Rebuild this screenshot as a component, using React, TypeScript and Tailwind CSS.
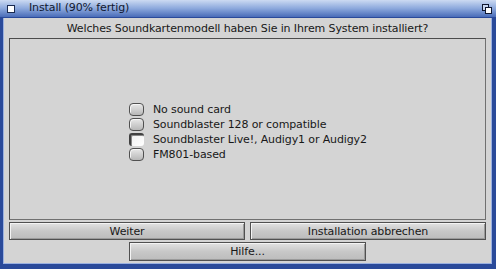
import React, { useState } from 'react';

const options = [
  'No sound card',
  'Soundblaster 128 or compatible',
  'Soundblaster Live!, Audigy1 or Audigy2',
  'FM801-based',
];

const Button: React.FC<{ label: string; className?: string }> = ({ label, className }) => (
  <button
    className={`h-[18px] border border-[#505050] bg-gradient-to-b from-[#e2e2e2] via-[#c8c8c8] to-[#bcbcbc] text-[11px] leading-none tracking-[-0.12px] text-[#181818] shadow-[inset_1px_1px_0_#f4f4f4,inset_-1px_-1px_0_#9a9a9a] ${className ?? ''}`}
  >
    {label}
  </button>
);

const Radio: React.FC<{ checked: boolean }> = ({ checked }) =>
  checked ? (
    <span className="w-[15px] h-[13px] rounded-[3px] bg-gradient-to-br from-[#f0f0f0] to-white border-t-2 border-l-2 border-[#404040] shadow-[inset_1px_1px_0_#888]" />
  ) : (
    <span className="w-[15px] h-[13px] rounded-[4px] border border-[#505050] bg-gradient-to-b from-[#e8e8e8] to-[#b8b8b8] shadow-[inset_1px_1px_0_#f6f6f6]" />
  );

export default function App() {
  const [selected, setSelected] = useState(2);

  return (
    <div
      className="w-[496px] h-[269px] flex flex-col bg-[#2a4a9a] overflow-hidden"
      style={{ fontFamily: '"DejaVu Sans", Verdana, sans-serif' }}
    >
      {/* title bar */}
      <div className="h-[18px] flex items-center bg-gradient-to-b from-[#ccdaf2] via-[#8ca8dc] to-[#4a6cb8] border-b border-[#2a4a9a]">
        <span className="ml-[7px] w-[8px] h-[8px] bg-white border border-[#1a2a50]" />
        <span className="ml-[14px] text-[11px] tracking-[-0.12px] text-[#101830]">Install (90% fertig)</span>
        <span className="ml-auto mr-[4px] relative w-[10px] h-[10px]">
          <span className="absolute left-0 top-0 w-[7px] h-[7px] border border-[#101830] bg-[#c8d6f0]" />
          <span className="absolute left-[3px] top-[3px] w-[7px] h-[7px] border border-[#101830] bg-white" />
        </span>
      </div>

      {/* body */}
      <div className="flex-1 ml-[3px] mr-[4px] mb-[5px] flex flex-col bg-[#d4d4d4] border-l border-r border-b border-[#9ab0e0] px-[5px]">
        <div className="h-[19px] flex items-center justify-center text-[11px] tracking-[-0.12px] text-[#181818] pt-[3px]">
          Welches Soundkartenmodell haben Sie in Ihrem System installiert?
        </div>
        <div className="flex-1 mt-[1px] border border-[#4c4c4c] border-r-[#707070] border-b-[#707070] bg-[#d4d4d4] flex flex-col items-start justify-center pl-[119px] pt-[5px]">
          {options.map((o, i) => (
            <div
              key={o}
              className="h-[15px] flex items-center gap-[9px] cursor-pointer"
              onClick={() => setSelected(i)}
            >
              <Radio checked={selected === i} />
              <span className="text-[11px] tracking-[-0.12px] text-[#181818] leading-none">{o}</span>
            </div>
          ))}
        </div>
        <div className="mt-[2px] flex gap-[5px]">
          <Button label="Weiter" className="flex-1" />
          <Button label="Installation abbrechen" className="flex-1" />
        </div>
        <div className="mt-[2px] mb-[2px] flex justify-center">
          <Button label="Hilfe..." className="w-[237px] h-[19px]" />
        </div>
      </div>
    </div>
  );
}
